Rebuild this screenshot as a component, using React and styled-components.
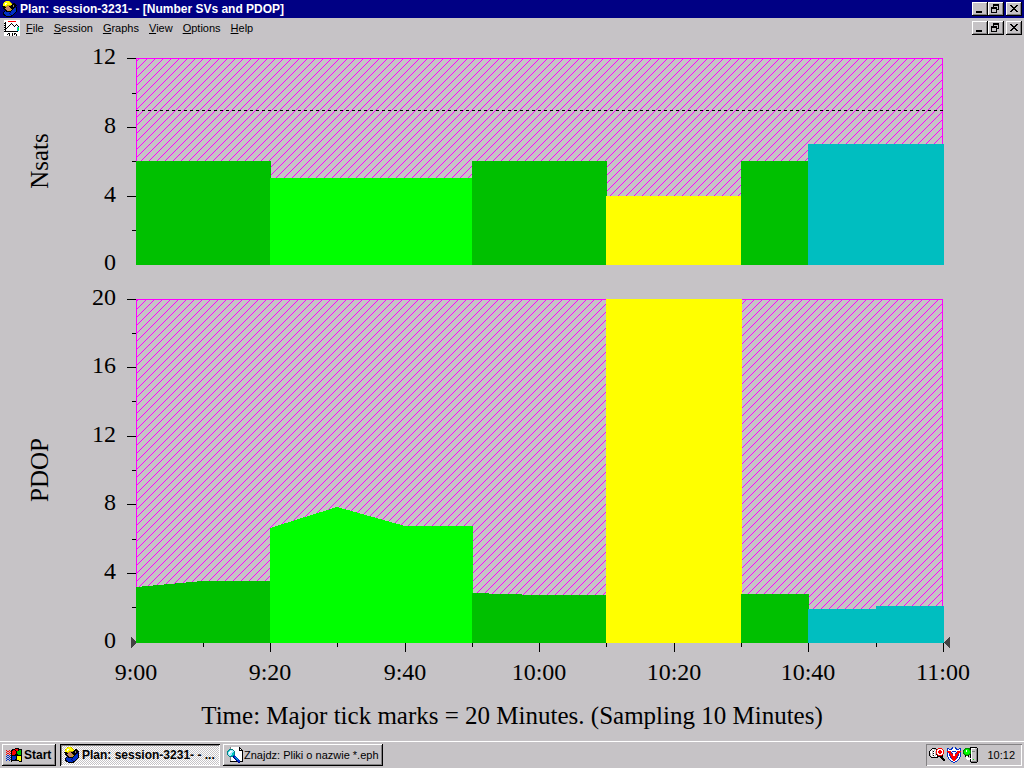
import styled, { createGlobalStyle } from "styled-components";

const GlobalStyle = createGlobalStyle`
  * {
    box-sizing: border-box;
  }
  body {
    margin: 0;
    background: #c6c3c6;
    font-family: "Liberation Sans", Arial, sans-serif;
    font-size: 11px;
    color: #000;
  }
  button {
    font: inherit;
    color: inherit;
    border: 0;
    padding: 0;
    background: none;
  }
`;

const Desktop = styled.div`
  display: flex;
  flex-direction: column;
  min-height: 100vh;
`;

const TitleBar = styled.header`
  display: flex;
  align-items: center;
  gap: 2px;
  height: 18px;
  padding: 0 2px;
  background: #000084;
  color: #fff;
`;
const TitleText = styled.h1`
  flex: 1;
  margin: 0;
  font-size: 12px;
  line-height: 16px;
  font-weight: bold;
  white-space: nowrap;
`;

const MenuBar = styled.nav`
  display: flex;
  align-items: center;
  gap: 6px;
  height: 20px;
  padding: 0 2px 0 4px;
`;
const MenuItems = styled.div`
  flex: 1;
  display: flex;
  gap: 10px;
  line-height: 16px;
`;

const WindowButtons = styled.div`
  display: flex;
`;
const WindowButton = styled.button`
  display: flex;
  width: 16px;
  height: 14px;
  background: #c6c3c6;
  color: #000;
  box-shadow: inset -1px -1px #000, inset 1px 1px #fff, inset -2px -2px #848284;
  &:last-child {
    margin-left: 2px;
  }
`;

const Main = styled.main`
  flex: 1;
`;
const ChartSvg = styled.svg`
  display: block;
  width: 100%;
  font-family: "Liberation Serif", "Times New Roman", serif;
  font-size: 24px;
`;
const AxisTitle = styled.text`
  font-size: 25px;
  text-anchor: middle;
`;

const Taskbar = styled.footer`
  display: flex;
  align-items: center;
  gap: 4px;
  height: 28px;
  padding: 2px 2px 0;
  box-shadow: inset 0 1px #c6c3c6, inset 0 2px #fff;
`;
const TaskbarButton = styled.button`
  display: flex;
  align-items: center;
  gap: ${(p) => (p.$bold ? "2px" : "1px")};
  width: ${(p) => p.$width};
  height: 22px;
  padding: 0 3px 0 4px;
  font-size: ${(p) => (p.$bold ? "12px" : "11px")};
  font-weight: ${(p) => (p.$bold ? "bold" : "normal")};
  line-height: 16px;
  white-space: nowrap;
  background: ${(p) =>
    p.$pressed
      ? "conic-gradient(#fff 25%, #c6c3c6 0 50%, #fff 0 75%, #c6c3c6 0) 0 0 / 2px 2px"
      : "#c6c3c6"};
  box-shadow: ${(p) =>
    p.$pressed
      ? "inset 1px 1px #000, inset -1px -1px #fff, inset 2px 2px #848284"
      : "inset -1px -1px #000, inset 1px 1px #fff, inset -2px -2px #848284"};
`;
const TaskList = styled.div`
  flex: 1;
  display: flex;
  gap: 3px;
`;
const Tray = styled.div`
  display: flex;
  align-items: center;
  gap: 1px;
  height: 22px;
  padding: 0 7px 0 3px;
  box-shadow: inset 1px 1px #848284, inset -1px -1px #fff;
`;
const Clock = styled.time`
  margin-left: 7px;
`;

const IconSvg = styled.svg`
  flex: none;
  display: block;
`;

const PALETTE = {
  k: "#000000",
  w: "#ffffff",
  y: "#ffff00",
  o: "#c6a200",
  f: "#c68263",
  b: "#0030c6",
  n: "#000084",
  g: "#848284",
  s: "#c6c3c6",
  c: "#00c3c6",
  l: "#a5ebff",
  r: "#ff0000",
  e: "#00c300",
  v: "#00ff00",
  t: "#008200",
  q: "#008284",
};

// one character per pixel, "." is transparent
const PixelIcon = ({ rows }) => (
  <IconSvg
    width={rows[0].length}
    height={rows.length}
    shapeRendering="crispEdges"
    aria-hidden="true"
  >
    {rows.map((row, y) =>
      [...row].map((ch, x) =>
        ch === "." ? null : (
          <rect key={`${x}-${y}`} x={x} y={y} width="1" height="1" fill={PALETTE[ch]} />
        )
      )
    )}
  </IconSvg>
);

const SURVEYOR = [
  "...oyyyo........",
  "..yyyyyyo.......",
  ".oywwyyyyo.kk...",
  ".yywyyyyyykkkk..",
  ".yyyyooookkgkkk.",
  "kkkooffkkkkgkkn.",
  ".kkkffffkkkkknk.",
  ".kkfffffokkkbbk.",
  "..kkfffffokbbbk.",
  "...kkffookbbbbk.",
  "..kbkkkkkbbbbbk.",
  ".kbbbbbbnbbbbk..",
  ".kbbbbbnbbbbk...",
  ".kkbbbbbnbbk....",
  "..kkbbbbbkk.....",
  "....kkkkkk......",
];

const PLOT = [
  "wwwwwwwwwwwwwwww",
  "wwwwrrrrrrrrwwww",
  "wkwwwwwwwwwwwwww",
  "kkwwwwwkwwwwwwww",
  "wkwwwwkwkwwwkwww",
  "kkwwwkwwwkwkwkww",
  "wkwwkwwwwwkwwwkw",
  "kkwkwwwwwwwwwccw",
  "wkkwwwwwwwwwwcvw",
  "kkwwwwwwwwwwwcvw",
  "wkwwwwwwwwwwwccw",
  "kkkkkkkkkkkkkkww",
  "wwwwwwwwwwwwwwww",
  "wwwwkkwwkwkkwwww",
  "wwwkwkwwkwkwkwww",
  "wwwwwkwwkwwwkwww",
];

const FLAG = [
  ".........kkkk...",
  "......kkkrrrkkkk",
  "r..r.kkrrkrrkeek",
  ".rr.rkrrrrkeeeek",
  "r..r.krrrrkeeeek",
  ".rr.rkrrrrkeeeek",
  "r..r.krrrkkkeeek",
  ".bb.bkkkkkkkkkkk",
  "b..b.kbbbbkyyyyk",
  ".bb.bkbbbbkyyyyk",
  "b..b.kbbbbkyyyyk",
  ".bb.bkbbbkkyyyyk",
  "b..b.kkkkkkkkyyk",
  ".....k.......kkk",
];

const FIND = [
  "...gwwwwwwwwk...",
  "...gwwwwwwwwkk..",
  "..qqqqwwwwwwkwk.",
  ".qclllqwwwwwkkkk",
  "qclwwllqwwwwwwwk",
  "qlwwllcqwwwwwwwk",
  "qlwllccqwwwwwwwk",
  "qllllccqwwwwwwwk",
  ".qllccqbwwwwwwwk",
  "..qqqqnbbwwwwwwk",
  "...gwwnbcbwwwwwk",
  "...gwwwnbcbwwwwk",
  "...gwwwwnbcbwwwk",
  "...gwwwwwnbbbwwk",
  "...kkkkkkknbbkkk",
  "...........nn...",
];

const MONITOR = [
  "................",
  "...kkkk..rrrr...",
  "..kwwsskrwwwwr..",
  ".kwswswrwwrrwwr.",
  "kwwskwsrwrrrrwr.",
  "kwwswwsrwrrrrwr.",
  "kswskwsrwwrrwwr.",
  "kswswwskrwwwwr..",
  "kswskwswkrrrrk..",
  ".kswwswwkkkkkk..",
  "..kkkkkkk..kkk..",
  "............kkk.",
  ".............kkk",
  "..............kk",
  "................",
  "................",
];

const SHIELD = [
  "......b..b......",
  ".bb..bbwwbb..bb.",
  ".bwbbbwwwwbbbwb.",
  ".bwwwwwwwwwwwwb.",
  ".rrrrwbbbbwrrrr.",
  ".brrrbwwwwbrrrb.",
  ".bwrrrbwwbrrrwb.",
  ".bwbrrrwwrrrbwb.",
  ".bwbrrrwwrrrbwb.",
  ".bwwbrrrrrrbwwb.",
  "..bwbrrrrrrbwb..",
  "..bwwbrrrrbwwb..",
  "...bwwrrrrwwb...",
  "....bwwrrwwb....",
  ".....bbwwbb.....",
  ".......bb.......",
];

const POWER = [
  ".......kkkkkkk..",
  "..tttttkwwwwssk.",
  ".tevvetkwssssgk.",
  "tevwvvetwssssgk.",
  "tvvwvvvtwgggsgk.",
  "tvvvvvvtwssssgk.",
  "tevvvvetwssssgk.",
  ".teeeetkwssssgk.",
  "..kttk.kwssssgk.",
  "..kwwk.kwssssgk.",
  "...ww..kwssssgk.",
  "...wwwwwwssssgk.",
  "....wwwkwsvssgk.",
  ".......kwssssgk.",
  ".......kggggggk.",
  "........kkkkkk..",
];

const Minimize = () => (
  <IconSvg width="16" height="14" shapeRendering="crispEdges" aria-hidden="true">
    <rect x="4" y="9" width="6" height="2" />
  </IconSvg>
);
const Restore = () => (
  <IconSvg width="16" height="14" shapeRendering="crispEdges" aria-hidden="true">
    <path d="M5 2h6v6h-2v-1h1v-3h-4v1h-1zM3 5h6v6h-6zM4 7v3h4v-3z" fillRule="evenodd" />
  </IconSvg>
);
const Close = () => (
  <IconSvg width="16" height="14" shapeRendering="crispEdges" aria-hidden="true">
    <path d="M4 3h2v1h1v1h2v-1h1v-1h2v1h-1v1h-1v1h-1v1h1v1h1v1h1v1h-2v-1h-1v-1h-2v1h-1v1h-2v-1h1v-1h1v-1h1v-1h-1v-1h-1v-1h-1z" />
  </IconSvg>
);

const Controls = ({ target }) => (
  <WindowButtons>
    <WindowButton aria-label={`Minimize ${target}`}>
      <Minimize />
    </WindowButton>
    <WindowButton aria-label={`Restore ${target}`}>
      <Restore />
    </WindowButton>
    <WindowButton aria-label={`Close ${target}`}>
      <Close />
    </WindowButton>
  </WindowButtons>
);

const GREEN = "#00c000";
const LIME = "#00ff00";
const YELLOW = "#ffff00";
const TEAL = "#00bec0";

const NSATS = [
  { from: 136, to: 271, top: 161, color: GREEN },
  { from: 270, to: 473, top: 178, color: LIME },
  { from: 472, to: 607, top: 161, color: GREEN },
  { from: 606, to: 742, top: 196, color: YELLOW },
  { from: 741, to: 809, top: 161, color: GREEN },
  { from: 808, to: 944, top: 144, color: TEAL },
];

const PDOP = [
  { points: "136,643 136,587 203,581 271,581 271,643", color: GREEN },
  { points: "270,643 270,528 337,507 405,526 473,526 473,643", color: LIME },
  { points: "472,643 472,593 539,595 607,595 607,643", color: GREEN },
  { points: "606,643 606,299 742,299 742,643", color: YELLOW },
  { points: "741,643 741,594 809,594 809,643", color: GREEN },
  { points: "808,643 808,609 876,609 876,606 944,606 944,643", color: TEAL },
];

const NSATS_TICKS = [
  { y: 58, label: "12" },
  { y: 93 },
  { y: 127, label: "8" },
  { y: 161 },
  { y: 196, label: "4" },
  { y: 230 },
];
const PDOP_TICKS = [
  { y: 299, label: "20" },
  { y: 333 },
  { y: 367, label: "16" },
  { y: 401 },
  { y: 436, label: "12" },
  { y: 470 },
  { y: 504, label: "8" },
  { y: 539 },
  { y: 573, label: "4" },
  { y: 607 },
];
const TIME_TICKS = [
  { x: 203 },
  { x: 270, label: "9:20" },
  { x: 337 },
  { x: 405, label: "9:40" },
  { x: 472 },
  { x: 539, label: "10:00" },
  { x: 606 },
  { x: 674, label: "10:20" },
  { x: 741 },
  { x: 808, label: "10:40" },
  { x: 876 },
  { x: 943, label: "11:00" },
];

const YAxis = ({ ticks, zero }) => (
  <g textAnchor="end">
    {ticks.map(({ y, label }) => (
      <g key={y}>
        <rect x={label ? 127 : 132} y={y} width={label ? 9 : 4} height="1" />
        {label && (
          <text x="116" y={y + 6}>
            {label}
          </text>
        )}
      </g>
    ))}
    <text x="116" y={zero + 6}>
      0
    </text>
  </g>
);

const PlotArea = ({ y, height }) => (
  <g>
    <rect x="136" y={y} width="807" height={height} fill="url(#hatch)" />
    <rect x="136" y={y} width="807" height="1" fill="#ff00ff" />
    <rect x="136" y={y} width="1" height={height} fill="#ff00ff" />
    <rect x="942" y={y} width="1" height={height} fill="#ff00ff" />
  </g>
);

const Chart = () => (
  <ChartSvg
    viewBox="0 38 1024 702"
    shapeRendering="crispEdges"
    role="img"
    aria-label="Number SVs and PDOP"
  >
    <defs>
      <pattern id="hatch" width="8" height="8" patternUnits="userSpaceOnUse">
        {[0, 1, 2, 3, 4, 5, 6, 7].map((i) => (
          <rect key={i} x={i} y={(13 - i) % 8} width="1" height="1" fill="#ff00ff" />
        ))}
      </pattern>
    </defs>

    <PlotArea y={58} height={207} />
    <line x1="136" x2="943" y1="110.5" y2="110.5" stroke="#000" strokeDasharray="3 3" />
    {NSATS.map(({ from, to, top, color }) => (
      <rect key={from} x={from} y={top} width={to - from} height={265 - top} fill={color} />
    ))}
    <YAxis ticks={NSATS_TICKS} zero={264} />
    <AxisTitle transform="translate(48 161) rotate(-90)">Nsats</AxisTitle>

    <PlotArea y={299} height={344} />
    {PDOP.map(({ points, color }) => (
      <polygon key={points} points={points} fill={color} />
    ))}
    <YAxis ticks={PDOP_TICKS} zero={642} />
    <AxisTitle transform="translate(48 470) rotate(-90)">PDOP</AxisTitle>

    <polygon points="131,636 136,642 136,643 131,649" fill="#424142" />
    <polygon points="950,636 944,642 944,643 950,649" fill="#424142" />
    <g textAnchor="middle">
      <text x="136" y="680">
        9:00
      </text>
      {TIME_TICKS.map(({ x, label }) => (
        <g key={x}>
          <rect x={x} y="643" width="1" height={label ? 9 : 4} />
          {label && (
            <text x={x} y="680">
              {label}
            </text>
          )}
        </g>
      ))}
    </g>
    <AxisTitle x="512" y="724">
      Time: Major tick marks = 20 Minutes. (Sampling 10 Minutes)
    </AxisTitle>
  </ChartSvg>
);

const MENU = ["File", "Session", "Graphs", "View", "Options", "Help"];

export default function App() {
  return (
    <Desktop>
      <GlobalStyle />
      <TitleBar>
        <PixelIcon rows={SURVEYOR} />
        <TitleText>Plan: session-3231- - [Number SVs and PDOP]</TitleText>
        <Controls target="application" />
      </TitleBar>
      <MenuBar>
        <PixelIcon rows={PLOT} />
        <MenuItems>
          {MENU.map((item) => (
            <button key={item}>
              <u>{item[0]}</u>
              {item.slice(1)}
            </button>
          ))}
        </MenuItems>
        <Controls target="document" />
      </MenuBar>
      <Main>
        <Chart />
      </Main>
      <Taskbar>
        <TaskbarButton $width="54px" $bold>
          <PixelIcon rows={FLAG} />
          Start
        </TaskbarButton>
        <TaskList>
          <TaskbarButton $width="160px" $bold $pressed>
            <PixelIcon rows={SURVEYOR} />
            Plan: session-3231- - ...
          </TaskbarButton>
          <TaskbarButton $width="160px">
            <PixelIcon rows={FIND} />
            Znajdz: Pliki o nazwie *.eph
          </TaskbarButton>
        </TaskList>
        <Tray>
          <PixelIcon rows={MONITOR} />
          <PixelIcon rows={SHIELD} />
          <PixelIcon rows={POWER} />
          <Clock>10:12</Clock>
        </Tray>
      </Taskbar>
    </Desktop>
  );
}
